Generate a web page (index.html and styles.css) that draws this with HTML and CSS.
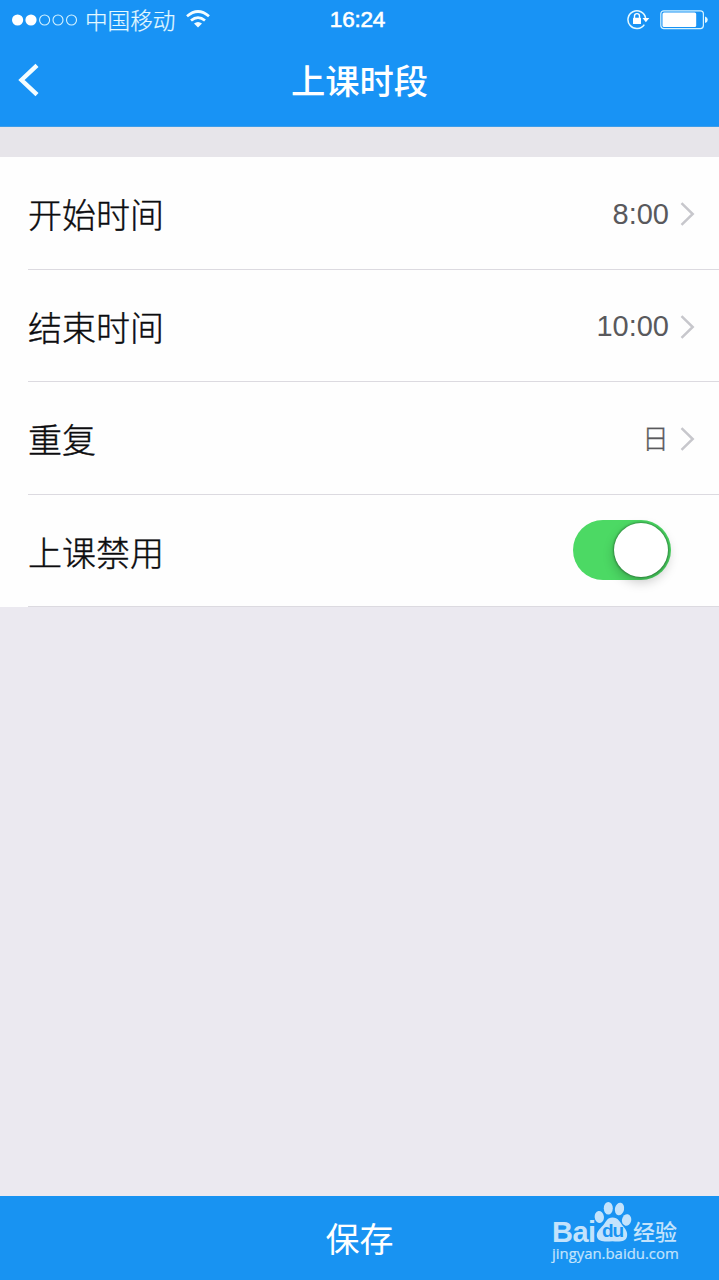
FILE: index.html
```html
<!DOCTYPE html>
<html lang="zh-CN">
<head>
<meta charset="utf-8">
<title>上课时段</title>
<link rel="stylesheet" href="styles.css">
</head>
<body>
<div class="screen">
  <header class="header">
    <div class="status">
      <div class="status-left">
        <svg class="signal" width="66" height="12" viewBox="0 0 66 12">
          <g fill="#fff"><circle cx="5.6" cy="6" r="5.6"/><circle cx="19" cy="6" r="5.6"/></g>
          <g fill="none" stroke="#d5f3ff" stroke-width="1.1"><circle cx="32.6" cy="6" r="5"/><circle cx="46" cy="6" r="5"/><circle cx="59.5" cy="6" r="5"/></g>
        </svg>
        <span class="carrier">中国移动</span>
        <svg class="wifi" width="24" height="18" viewBox="0 0 24 18">
          <g fill="none" stroke="#f4fdff" stroke-width="2.7"><path d="M1 6.3Q12-3.3 23 6.3"/><path d="M5 10.6Q12 4.5 19 10.6"/></g>
          <path d="M8 13.6Q12 10.2 16 13.6L12 17.6Z" fill="#f4fdff"/>
        </svg>
      </div>
      <span class="clock">16:24</span>
      <div class="status-right">
        <svg class="lock" width="23" height="21" viewBox="0 0 23 21">
          <path d="M17.3 15.6A8.9 8.9 0 1 1 18.6 9" fill="none" stroke="#e4f9ff" stroke-width="1.5"/>
          <path d="M15.5 9h6.8l-3.4 4.3z" fill="#fff"/>
          <rect x="6" y="8.8" width="8" height="6.3" rx=".6" fill="#fff"/>
          <path d="M7.5 9V7.1a2.5 2.5 0 0 1 5 0V9" fill="none" stroke="#fff" stroke-width="1.4"/>
        </svg>
        <svg class="battery" width="48" height="20" viewBox="0 0 48 20">
          <rect x=".8" y=".8" width="42.6" height="17.8" rx="3" fill="none" stroke="#d5f3ff" stroke-width="1.2"/>
          <rect x="2.5" y="2.5" width="33.7" height="14.4" rx="1.5" fill="#fff"/>
          <path d="M45 6.5q2.8.7 2.8 3.2T45 12.9z" fill="#e4f9ff"/>
        </svg>
      </div>
    </div>
    <div class="nav">
      <svg class="back" width="22" height="34" viewBox="0 0 22 34"><path d="M20 2.3L4.5 17 20 31.7" fill="none" stroke="#f4fdff" stroke-width="4.4"/></svg>
      <h1 class="title">上课时段</h1>
    </div>
  </header>
  <div class="gap"></div>
  <main class="list">
    <div class="row">
      <span class="label">开始时间</span><span class="value">8:00</span>
      <svg class="chevron" width="15" height="24" viewBox="0 0 15 24"><path d="M1.5 1.2L12.7 12 1.5 22.8" fill="none" stroke="#c7c7cc" stroke-width="2.5"/></svg>
    </div>
    <div class="row">
      <span class="label">结束时间</span><span class="value">10:00</span>
      <svg class="chevron" width="15" height="24" viewBox="0 0 15 24"><path d="M1.5 1.2L12.7 12 1.5 22.8" fill="none" stroke="#c7c7cc" stroke-width="2.5"/></svg>
    </div>
    <div class="row">
      <span class="label">重复</span><span class="value value-day">日</span>
      <svg class="chevron" width="15" height="24" viewBox="0 0 15 24"><path d="M1.5 1.2L12.7 12 1.5 22.8" fill="none" stroke="#c7c7cc" stroke-width="2.5"/></svg>
    </div>
    <div class="row">
      <span class="label">上课禁用</span>
      <span class="toggle"><span class="knob"></span></span>
    </div>
  </main>
  <footer class="footer">
    <span class="save">保存</span>
    <div class="watermark">
      <div class="brand">
        <span class="brand-bai">Bai</span>
        <span class="paw">
          <svg width="38" height="41" viewBox="0 0 38 41" fill="#c3e3fc">
            <ellipse cx="5.3" cy="16" rx="4.6" ry="6" transform="rotate(-8 5.3 16)"/>
            <ellipse cx="14.3" cy="7.2" rx="4.5" ry="6.3"/>
            <ellipse cx="25.5" cy="8" rx="4.6" ry="6.3" transform="rotate(12 25.5 8)"/>
            <ellipse cx="32.6" cy="19" rx="4.6" ry="5.8" transform="rotate(12 32.6 19)"/>
            <path d="M18.5 16.5C24 16.5 26 21 28.5 24.5C31.5 28 34 31 33 35.5C32 40.5 27 40.8 18.5 40.3C10 40.8 4.5 40.8 3 36C2 31.5 5.5 28 9 24.5C12 21 13 16.5 18.5 16.5Z"/>
          </svg>
          <span class="brand-du">du</span>
        </span>
        <span class="brand-name">经验</span>
      </div>
      <span class="site">jingyan.baidu.com</span>
    </div>
  </footer>
</div>
</body>
</html>
```

FILE: styles.css
```css
* { box-sizing: border-box; }
body {
  margin: 0;
  font-family: "Liberation Sans", "Noto Sans CJK SC", sans-serif;
}
.screen {
  display: flex;
  flex-direction: column;
  width: 719px;
  height: 1280px;
  background: #ebe9f0;
  overflow: hidden;
}
.header {
  height: 127px;
  background: #1893f5;
  color: #fff;
  border-bottom: 1px solid #3d9de9;
}
.gap { height: 30px; background: #e7e5ea; }
.status {
  display: grid;
  grid-template-columns: 1fr auto 1fr;
  align-items: center;
  height: 40px;
  padding: 0 11px 0 12px;
}
.status-left, .status-right { display: flex; align-items: center; }
.status-right { justify-content: flex-end; gap: 10px; }
.lock { margin-top: -1px; }
.carrier {
  margin-left: 7px;
  font: 300 22.6px/40px "Noto Sans CJK SC", sans-serif;
  color: #e4f9ff;
  -webkit-text-stroke: .2px #e4f9ff;
}
.wifi { margin-left: 11px; margin-top: -2px; }
.clock {
  margin-right: 5px;
  font-size: 22.5px;
  line-height: 40px;
  letter-spacing: -.2px;
  -webkit-text-stroke: .6px #fff;
}
.nav {
  display: grid;
  grid-template-columns: 60px 1fr 60px;
  align-items: center;
  height: 80px;
}
.back { margin-left: 17px; }
.title {
  margin: 0 0 2px;
  text-align: center;
  font: 500 34.3px/50px "Noto Sans CJK SC", sans-serif;
}
.list {
  height: 450px;
  background: #fefefe;
}
.row {
  display: flex;
  align-items: center;
  height: 112.5px;
  margin-left: 28px;
  padding-right: 24px;
  border-bottom: 1px solid #dcdae0;
}
.label {
  flex: 1;
  font: 300 34px/50px "Noto Sans CJK SC", sans-serif;
  color: #0c0c0e;
  -webkit-text-stroke: .4px #0c0c0e;
  padding-top: 3px;
}
.value {
  font-size: 29px;
  line-height: 40px;
  color: #59595c;
  margin-right: 11px;
  padding-top: 2px;
}
.value-day {
  font-family: "Noto Sans CJK SC", sans-serif;
  font-weight: 300;
  font-size: 27px;
  padding-top: 0;
  -webkit-text-stroke: .3px #59595c;
}
.chevron { margin-top: 3px; }
.toggle {
  display: flex;
  justify-content: flex-end;
  width: 98px;
  height: 60px;
  margin-right: 24px;
  padding: 3px;
  border-radius: 30px;
  background: #4cd964;
}
.knob {
  width: 54px;
  height: 54px;
  border-radius: 50%;
  background: #fff;
  box-shadow: 0 0 2px 1px rgba(0,0,0,.3), 0 5px 12px rgba(0,0,0,.22);
}
.footer {
  display: grid;
  grid-template-columns: 1fr auto 1fr;
  align-items: center;
  height: 84px;
  margin-top: auto;
  background: #1893f2;
  color: #fff;
}
.save {
  grid-column: 2;
  font: 400 34px/50px "Noto Sans CJK SC", sans-serif;
}
.watermark {
  justify-self: end;
  width: 128px;
  margin-right: 39px;
  padding-bottom: 12px;
  color: #c3e3fc;
}
.brand { display: flex; align-items: flex-end; height: 42px; }
.brand-bai {
  width: 42px;
  font: 700 29px/20px "Liberation Sans", sans-serif;
  letter-spacing: -.5px;
}
.paw { position: relative; width: 38px; height: 41px; }
.brand-du {
  position: absolute;
  left: 8px;
  bottom: 2px;
  font: 700 19px/18px "Liberation Sans", sans-serif;
  letter-spacing: -1px;
  color: #1893f2;
}
.brand-name {
  margin-left: 1px;
  font: 500 22px/24px "Noto Sans CJK SC", sans-serif;
}
.site {
  display: block;
  font: 14.9px/22px "Open Sans", sans-serif;
  -webkit-text-stroke: .2px #c3e3fc;
}
```
